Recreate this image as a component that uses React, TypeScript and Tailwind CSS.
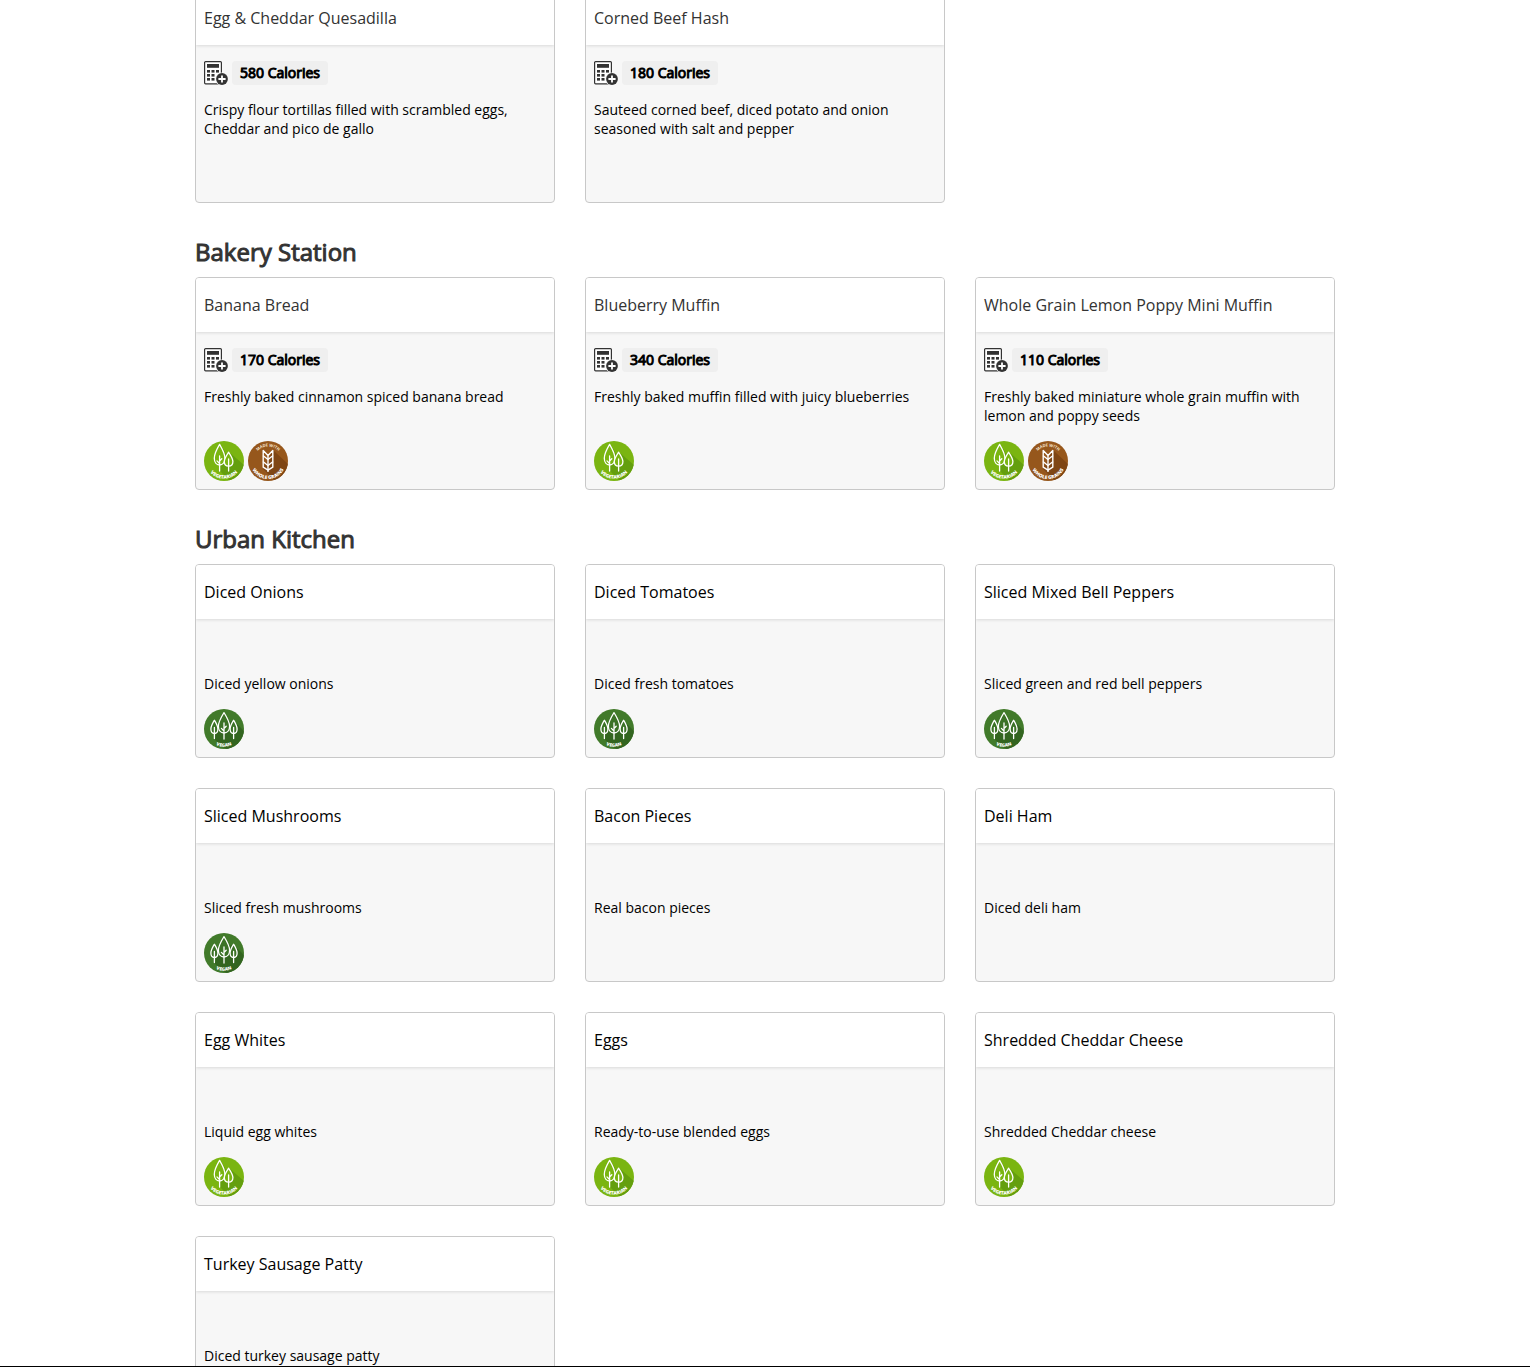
import React from "react";

type Diet = "vegetarian" | "vegan" | "wholeGrain";

type Item = {
  name: string;
  description: string;
  calories?: number;
  diets?: Diet[];
};

type Station = {
  name?: string;
  items: Item[];
};

const stations: Station[] = [
  {
    items: [
      {
        name: "Egg & Cheddar Quesadilla",
        calories: 580,
        description:
          "Crispy flour tortillas filled with scrambled eggs, Cheddar and pico de gallo",
      },
      {
        name: "Corned Beef Hash",
        calories: 180,
        description:
          "Sauteed corned beef, diced potato and onion seasoned with salt and pepper",
      },
    ],
  },
  {
    name: "Bakery Station",
    items: [
      {
        name: "Banana Bread",
        calories: 170,
        description: "Freshly baked cinnamon spiced banana bread",
        diets: ["vegetarian", "wholeGrain"],
      },
      {
        name: "Blueberry Muffin",
        calories: 340,
        description: "Freshly baked muffin filled with juicy blueberries",
        diets: ["vegetarian"],
      },
      {
        name: "Whole Grain Lemon Poppy Mini Muffin",
        calories: 110,
        description:
          "Freshly baked miniature whole grain muffin with lemon and poppy seeds",
        diets: ["vegetarian", "wholeGrain"],
      },
    ],
  },
  {
    name: "Urban Kitchen",
    items: [
      { name: "Diced Onions", description: "Diced yellow onions", diets: ["vegan"] },
      { name: "Diced Tomatoes", description: "Diced fresh tomatoes", diets: ["vegan"] },
      {
        name: "Sliced Mixed Bell Peppers",
        description: "Sliced green and red bell peppers",
        diets: ["vegan"],
      },
      { name: "Sliced Mushrooms", description: "Sliced fresh mushrooms", diets: ["vegan"] },
      { name: "Bacon Pieces", description: "Real bacon pieces" },
      { name: "Deli Ham", description: "Diced deli ham" },
      { name: "Egg Whites", description: "Liquid egg whites", diets: ["vegetarian"] },
      { name: "Eggs", description: "Ready-to-use blended eggs", diets: ["vegetarian"] },
      {
        name: "Shredded Cheddar Cheese",
        description: "Shredded Cheddar cheese",
        diets: ["vegetarian"],
      },
      { name: "Turkey Sausage Patty", description: "Diced turkey sausage patty" },
    ],
  },
];

function CalculatorIcon() {
  return (
    <svg viewBox="0 0 24 24" className="size-6" aria-hidden="true">
      <rect x="0.6" y="0.6" width="16.8" height="22.2" rx="1" fill="#fff" stroke="#333" strokeWidth="1.2" />
      <rect x="3" y="3" width="12" height="3.8" fill="#333" />
      <g fill="#333">
        <rect x="3" y="9" width="3" height="2.6" />
        <rect x="7.5" y="9" width="3" height="2.6" />
        <rect x="12" y="9" width="3" height="2.6" />
        <rect x="3" y="13" width="3" height="2.6" />
        <rect x="7.5" y="13" width="3" height="2.6" />
        <rect x="3" y="17" width="3" height="2.6" />
        <rect x="7.5" y="17" width="3" height="2.6" />
      </g>
      <circle cx="18" cy="18" r="6.6" fill="#f7f7f7" />
      <circle cx="18" cy="18" r="5.9" fill="#333" />
      <path d="M18 14.4v7.2M14.4 18h7.2" stroke="#fff" strokeWidth="1.8" />
    </svg>
  );
}

function VegetarianBadge() {
  return (
    <svg viewBox="0 0 40 40" className="size-10" role="img" aria-label="Vegetarian">
      <defs>
        <clipPath id="veg-clip">
          <circle cx="20" cy="20" r="20" />
        </clipPath>
        <path id="veg-arc" d="M2.2 20a17.8 17.8 0 0 0 35.6 0" />
      </defs>
      <circle cx="20" cy="20" r="20" fill="#7ab511" />
      <path d="M17 4l5 9 3-2 15 13v16H26l-10-10z" fill="#649f0e" clipPath="url(#veg-clip)" />
      <g fill="#7ab511" stroke="#fff" strokeWidth="1.3" strokeLinecap="round" strokeLinejoin="round">
        <path d="M15.6 3.4c-2.6 4.4-5.3 9.2-5.3 13.800 0 4 2.200 6.800 5.300 6.800s5.300-2.800 5.300-6.800c0-4.600-2.700-9.400-5.300-13.800z" />
        <path d="M15.600 15v15M15.600 22.500l-2.600-2.600M15.600 20l2.200-2.200" fill="none" />
        <path d="M24.600 11.200c-2 3-4.300 6.400-4.300 9.400 0 2.800 1.800 4.600 4.300 4.600s4.300-1.800 4.300-4.600c0-3-2.300-6.400-4.300-9.400z" />
        <path d="M24.600 18v12" fill="none" />
      </g>
      <text fill="#fff" fontSize="4.800" fontWeight="800" textAnchor="middle">
        <textPath href="#veg-arc" startOffset="50%">VEGETARIAN</textPath>
      </text>
    </svg>
  );
}

function VeganBadge() {
  return (
    <svg viewBox="0 0 40 40" className="size-10" role="img" aria-label="Vegan">
      <defs>
        <clipPath id="vegan-clip">
          <circle cx="20" cy="20" r="20" />
        </clipPath>
        <path id="vegan-arc" d="M2.200 20a17.800 17.800 0 0 0 35.600 0" />
      </defs>
      <circle cx="20" cy="20" r="20" fill="#417a2a" />
      <path d="M20 4l6 9 3-2 11 11v18H22L10 30z" fill="#336520" clipPath="url(#vegan-clip)" />
      <g fill="#3b7226" stroke="#fff" strokeWidth="1.300" strokeLinecap="round" strokeLinejoin="round">
        <path d="M10.400 11.200c-1.600 2.800-3.500 5.800-3.500 8.800 0 2.700 1.400 4.500 3.500 4.500s3.500-1.800 3.500-4.500c0-3-1.900-6-3.500-8.800z" />
        <path d="M29.600 11.200c-1.600 2.800-3.500 5.800-3.500 8.800 0 2.700 1.400 4.500 3.500 4.500s3.500-1.800 3.500-4.500c0-3-1.900-6-3.500-8.800z" />
        <path d="M20 3.600c-2.600 4.200-5.600 9-5.600 13.600 0 4 2.300 6.800 5.600 6.800s5.600-2.800 5.600-6.800c0-4.600-3-9.400-5.600-13.600z" />
        <path d="M20 14v16M10.400 18.500V29.500M29.600 18.500V29.500M20 22l-2.600-2.600M20 19.500l2.200-2.200" fill="none" />
      </g>
      <text fill="#fff" fontSize="4.600" fontWeight="800" textAnchor="middle">
        <textPath href="#vegan-arc" startOffset="50%">VEGAN</textPath>
      </text>
    </svg>
  );
}

function WholeGrainBadge() {
  return (
    <svg viewBox="0 0 40 40" className="size-10" role="img" aria-label="Made with whole grains">
      <defs>
        <clipPath id="grain-clip">
          <circle cx="20" cy="20" r="20" />
        </clipPath>
        <path id="grain-top" d="M5.500 20a14.500 14.500 0 0 1 29 0" />
        <path id="grain-bottom" d="M2 20a18 18 0 0 0 36 0" />
      </defs>
      <circle cx="20" cy="20" r="20" fill="#96571c" />
      <path d="M25 9l15 14v17H27L15 28z" fill="#7f4614" clipPath="url(#grain-clip)" />
      <g fill="none" stroke="#fff" strokeWidth="1.400" strokeLinejoin="round">
        <path d="M20 31V14.500" />
        <path d="M20 18.500l-4.800-3.700V9.500l4.800 5 4.800-5v5.300z" />
        <path d="M15.200 14.800v6l4.800 3.700 4.800-3.700v-6" />
        <path d="M15.200 20.800v5.400l4.800 3 4.800-3v-5.400" />
      </g>
      <text fill="#f6e6d4" fontSize="4" fontWeight="700" textAnchor="middle">
        <textPath href="#grain-top" startOffset="50%">MADE WITH</textPath>
      </text>
      <text fill="#fff" fontSize="4.800" fontWeight="800" textAnchor="middle">
        <textPath href="#grain-bottom" startOffset="50%">WHOLE GRAINS</textPath>
      </text>
    </svg>
  );
}

const badges = {
  vegetarian: VegetarianBadge,
  vegan: VeganBadge,
  wholeGrain: WholeGrainBadge,
};

function ItemCard({ item }: { item: Item }) {
  return (
    <li className="flex flex-col rounded border border-[#c8c8c8] bg-[#f7f7f7] overflow-hidden">
      <div className="bg-white px-2 pt-4 pb-[15px] shadow-[0_1px_3px_rgba(0,0,0,0.12)]">
        {item.calories ? (
          <button type="button" className="block text-left text-base leading-[23px] text-[#333] cursor-pointer">
            {item.name}
          </button>
        ) : (
          <h3 className="text-base leading-[23px] text-black">{item.name}</h3>
        )}
      </div>
      <div className="flex flex-1 flex-col px-2 pt-4 pb-2">
        <div className="flex h-6 items-center gap-1">
          {item.calories && (
            <>
              <button type="button" aria-label="Add to calorie counter" className="cursor-pointer">
                <CalculatorIcon />
              </button>
              <span className="rounded bg-[#efefef] px-2 text-sm leading-6 text-black [-webkit-text-stroke:1px]">
                {item.calories} Calories
              </span>
            </>
          )}
        </div>
        <p className="mt-[15px] mb-4 text-sm leading-[19px] text-black">
          {item.description}
        </p>
        <div className="mt-auto flex h-10 gap-1">
          {item.diets?.map((diet) => {
            const Badge = badges[diet];
            return <Badge key={diet} />;
          })}
        </div>
      </div>
    </li>
  );
}

export default function App() {
  return (
    <div className="h-screen overflow-hidden border-b border-black bg-white font-['Open_Sans',sans-serif]">
      <main className="mx-auto -mt-[10px] max-w-[1140px]">
        {stations.map((station, index) => (
          <section key={index}>
            {station.name && (
              <h2 className="pt-[33px] pb-[9px] text-2xl leading-8 text-[#333] [-webkit-text-stroke:1px]">
                {station.name}
              </h2>
            )}
            <ul className="grid grid-cols-3 gap-[30px]">
              {station.items.map((item) => (
                <ItemCard key={item.name} item={item} />
              ))}
            </ul>
          </section>
        ))}
      </main>
    </div>
  );
}
